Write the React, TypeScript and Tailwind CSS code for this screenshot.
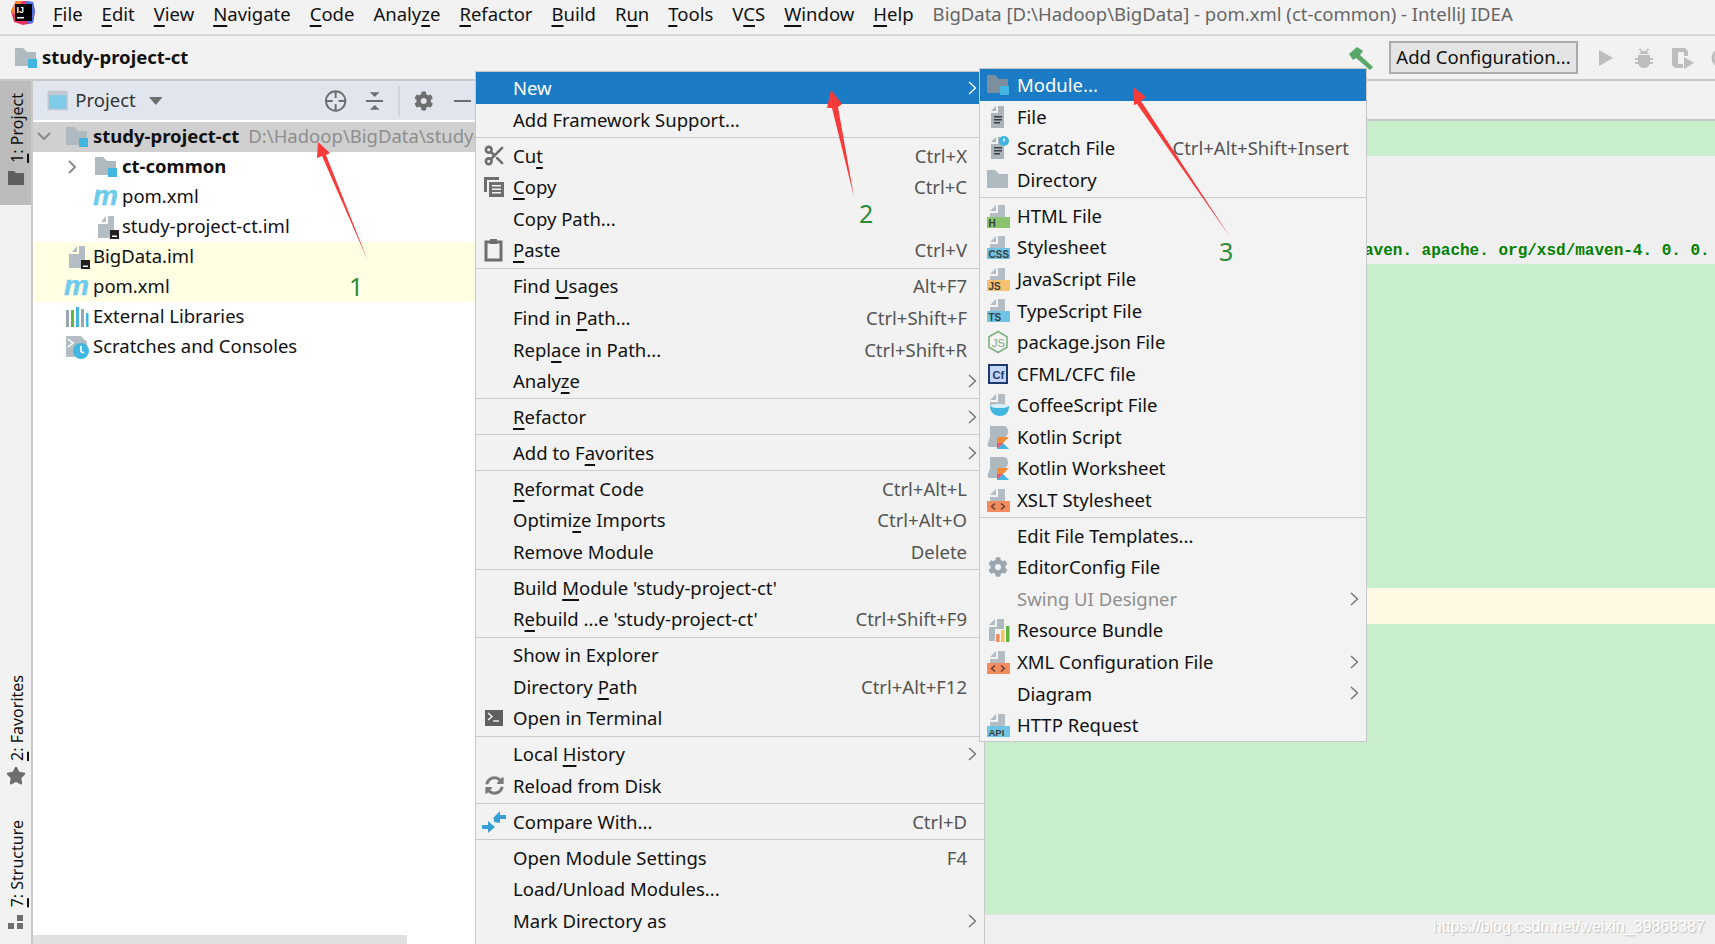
import { Scissors, Star } from "lucide-react";
import { FaCog, FaSyncAlt } from "react-icons/fa";

type Item = {
  label?: string;
  u?: number;
  icon?: React.ReactNode;
  keys?: string;
  more?: boolean;
  active?: boolean;
  off?: boolean;
  sep?: boolean;
};

function Mnemonic({ text, u }: { text: string; u?: number }) {
  if (u === undefined) return <>{text}</>;
  return (
    <>
      {text.slice(0, u)}
      <u className="decoration-[1.5px] underline-offset-[4px]">{text[u]}</u>
      {text.slice(u + 1)}
    </>
  );
}

function FolderIcon({ badge, dark }: { badge?: boolean; dark?: boolean }) {
  return (
    <svg width="24" height="24" viewBox="0 0 24 24">
      <path d="M1 2h8l4 4h9v14H1z" fill={dark ? "#7d8f9e" : "#aeb9c0"} />
      {badge && <rect x="14" y="13" width="9" height="9" fill="#40b6e0" />}
    </svg>
  );
}

function PageBase() {
  return (
    <>
      <path d="M10 1l-6 6h6z" fill="#b4bdc3" />
      <path d="M12 1h7v15H4V9h8z" fill="#b4bdc3" />
    </>
  );
}

function FileIcon({ clock }: { clock?: boolean }) {
  return (
    <svg width="24" height="24" viewBox="0 0 24 24">
      <path d="M10 1L5 6h5z" fill="#aab4ba" />
      <path d="M12 1h6v22H5V8h7z" fill="#aab4ba" />
      <path d="M8 11h8v1.500H8zM8 14h8v1.500H8zM8 17h6v1.500H8z" fill="#3c3f41" />
      {clock && (
        <>
          <circle cx="18" cy="5" r="5" fill="#40b6e0" />
          <path d="M18 2.500V5.500" stroke="#fff" strokeWidth="1.4" />
        </>
      )}
    </svg>
  );
}

function BadgeFile({ bg, text, fg = "#3c3f41", size = 10 }: { bg: string; text: string; fg?: string; size?: number }) {
  return (
    <svg width="24" height="24" viewBox="0 0 24 24">
      <PageBase />
      <rect x="1" y="13" width="23" height="11" fill={bg} />
      <text x="2.500" y="22.500" fontSize={size} fontWeight="700" fontFamily="Liberation Sans, sans-serif" fill={fg}>
        {text}
      </text>
    </svg>
  );
}

function XmlFile() {
  return (
    <svg width="24" height="24" viewBox="0 0 24 24">
      <PageBase />
      <rect x="1" y="13" width="23" height="11" fill="#f08c5f" />
      <path d="M9 15.500l-3.500 3 3.500 3M15 15.500l3.500 3-3.500 3" stroke="#5b3a2a" strokeWidth="1.3" fill="none" />
    </svg>
  );
}

function ImlIcon() {
  return (
    <svg width="24" height="24" viewBox="0 0 24 24" className="ml-[2px]">
      <path d="M10 1L5 7h5z" fill="#b4bdc3" />
      <path d="M12 1h6v14h-4v8H2V9h10z" fill="#b4bdc3" />
      <rect x="14" y="15" width="9" height="9" fill="#231f20" />
      <rect x="16" y="20.500" width="5" height="1.500" fill="#fff" />
    </svg>
  );
}

function MavenIcon() {
  return (
    <svg width="24" height="24" viewBox="0 0 24 24" className="overflow-visible">
      <text x="-1" y="20" fontSize="28" fontStyle="italic" fontWeight="700" fontFamily="Liberation Sans, sans-serif" fill="#6fcbec" stroke="#6fcbec" strokeWidth="0.5">
        m
      </text>
    </svg>
  );
}

function LibrariesIcon() {
  return (
    <svg width="24" height="24" viewBox="0 0 24 24">
      <rect x="1" y="5" width="3" height="17" fill="#9aa7b0" />
      <rect x="6" y="5" width="3" height="17" fill="#62b543" />
      <rect x="11" y="2" width="3" height="20" fill="#40b6e0" />
      <rect x="16" y="4" width="3" height="18" fill="#9aa7b0" />
      <rect x="21" y="8" width="2.500" height="14" fill="#40b6e0" />
    </svg>
  );
}

function ScratchesIcon() {
  return (
    <svg width="24" height="24" viewBox="0 0 24 24">
      <path d="M1 1h15l6 6v4H10v11H1z" fill="#b4bdc3" />
      <path d="M3 4l5 4-5 4" stroke="#fff" strokeWidth="1.6" fill="none" />
      <circle cx="16" cy="16" r="8" fill="#40b6e0" />
      <path d="M16 11v5.500l3 1.500" stroke="#fff" strokeWidth="1.6" fill="none" />
    </svg>
  );
}

function CopyIcon() {
  return (
    <svg width="22" height="22" viewBox="0 0 22 22" fill="#6e6e6e">
      <path d="M1 1h15v3H4v12H1z" />
      <path d="M6 6h15v15H6zM9 9v1.600h9V9zM9 12.500v1.600h9v-1.600zM9 16v1.600h9V16z" fillRule="evenodd" />
    </svg>
  );
}

function PasteIcon() {
  return (
    <svg width="22" height="24" viewBox="0 0 22 24" fill="none">
      <rect x="3" y="4" width="15" height="18" stroke="#6e6e6e" strokeWidth="3" />
      <rect x="7" y="1" width="7" height="5" fill="#6e6e6e" />
    </svg>
  );
}

function TerminalIcon() {
  return (
    <svg width="20" height="18" viewBox="0 0 20 18">
      <rect width="18" height="16" x="1" y="1" fill="#5f5f5f" />
      <path d="M4 4l4 3.500L4 11" stroke="#fff" strokeWidth="1.3" fill="none" />
      <path d="M9 12h6" stroke="#fff" strokeWidth="1.3" />
    </svg>
  );
}

function CompareIcon() {
  return (
    <svg width="24" height="24" viewBox="0 0 24 24" fill="#389fd6">
      <path d="M0 15h6v-4l7 6-7 6v-4H0zM12 12V9h-1L12 7l6-6v4h6v4h-6v4z" />
    </svg>
  );
}

function NodeIcon() {
  return (
    <svg width="22" height="24" viewBox="0 0 22 24" fill="none">
      <path d="M11 1.500l9 5.200v10.600l-9 5.200-9-5.200V6.700z" stroke="#7fb07f" strokeWidth="1.6" />
      <text x="5" y="16.500" fontSize="11" fontFamily="Liberation Sans, sans-serif" fill="#7fa87f">
        JS
      </text>
    </svg>
  );
}

function CfIcon() {
  return (
    <svg width="20" height="20" viewBox="0 0 20 20">
      <rect x="1" y="1" width="18" height="18" fill="#c5d5f5" stroke="#1f3a6e" strokeWidth="2" />
      <text x="4.500" y="14.500" fontSize="11" fontWeight="700" fontFamily="Liberation Sans, sans-serif" fill="#1f3a6e">
        Cf
      </text>
    </svg>
  );
}

function CoffeeIcon() {
  return (
    <svg width="24" height="24" viewBox="0 0 24 24">
      <PageBase />
      <path d="M4 13h19c0 6-3 10-9 10S4 19 4 13z" fill="#40b6e0" />
      <ellipse cx="13.500" cy="13" rx="9" ry="2" fill="#d8f0f8" />
    </svg>
  );
}

function KotlinIcon() {
  return (
    <svg width="24" height="24" viewBox="0 0 24 24">
      <path d="M5 1h13c3 0 4 3 4 6s-2 5-4 5h-4v10H5c-3 0-4-1-3-4l2-6V1z" fill="#aeb9c0" />
      <path d="M11 24l12-12H11z" fill="#f28b3c" />
      <path d="M11 24l6-6 6 6z" fill="#40b6e0" />
      <path d="M11 24v-6l6 0z" fill="#e8557a" />
    </svg>
  );
}

function ResourceIcon() {
  return (
    <svg width="24" height="24" viewBox="0 0 24 24">
      <path d="M9 1L3 7h6z" fill="#aeb9c0" />
      <path d="M11 1h7v10H9v12H3V9h8z" fill="#aeb9c0" />
      <rect x="10" y="16" width="3.500" height="8" fill="#f08c5f" />
      <rect x="15" y="12" width="3.500" height="12" fill="#f4c55c" />
      <rect x="20" y="8" width="3.500" height="16" fill="#62b543" />
    </svg>
  );
}

const mainMenu: Item[] = [
  { label: "New", more: true, active: true },
  { label: "Add Framework Support..." },
  { sep: true },
  { label: "Cut", u: 2, keys: "Ctrl+X", icon: <Scissors size={23} color="#6e6e6e" strokeWidth={2.7} /> },
  { label: "Copy", u: 0, keys: "Ctrl+C", icon: <CopyIcon /> },
  { label: "Copy Path..." },
  { label: "Paste", u: 0, keys: "Ctrl+V", icon: <PasteIcon /> },
  { sep: true },
  { label: "Find Usages", u: 5, keys: "Alt+F7" },
  { label: "Find in Path...", u: 8, keys: "Ctrl+Shift+F" },
  { label: "Replace in Path...", u: 4, keys: "Ctrl+Shift+R" },
  { label: "Analyze", u: 5, more: true },
  { sep: true },
  { label: "Refactor", u: 0, more: true },
  { sep: true },
  { label: "Add to Favorites", u: 8, more: true },
  { sep: true },
  { label: "Reformat Code", u: 0, keys: "Ctrl+Alt+L" },
  { label: "Optimize Imports", u: 6, keys: "Ctrl+Alt+O" },
  { label: "Remove Module", keys: "Delete" },
  { sep: true },
  { label: "Build Module 'study-project-ct'", u: 6 },
  { label: "Rebuild ...e 'study-project-ct'", u: 1, keys: "Ctrl+Shift+F9" },
  { sep: true },
  { label: "Show in Explorer" },
  { label: "Directory Path", u: 10, keys: "Ctrl+Alt+F12" },
  { label: "Open in Terminal", icon: <TerminalIcon /> },
  { sep: true },
  { label: "Local History", u: 6, more: true },
  { label: "Reload from Disk", icon: <FaSyncAlt size={19} color="#7a7a7a" /> },
  { sep: true },
  { label: "Compare With...", keys: "Ctrl+D", icon: <CompareIcon /> },
  { sep: true },
  { label: "Open Module Settings", keys: "F4" },
  { label: "Load/Unload Modules..." },
  { label: "Mark Directory as", more: true },
];

const newMenu: Item[] = [
  { label: "Module...", active: true, icon: <FolderIcon badge dark /> },
  { label: "File", icon: <FileIcon /> },
  { label: "Scratch File", keys: "Ctrl+Alt+Shift+Insert", icon: <FileIcon clock /> },
  { label: "Directory", icon: <FolderIcon /> },
  { sep: true },
  { label: "HTML File", icon: <BadgeFile bg="#8bc46f" text="H" /> },
  { label: "Stylesheet", icon: <BadgeFile bg="#6fc4e6" text="CSS" /> },
  { label: "JavaScript File", icon: <BadgeFile bg="#f4c271" text="JS" /> },
  { label: "TypeScript File", icon: <BadgeFile bg="#6fc4e6" text="TS" /> },
  { label: "package.json File", icon: <NodeIcon /> },
  { label: "CFML/CFC file", icon: <CfIcon /> },
  { label: "CoffeeScript File", icon: <CoffeeIcon /> },
  { label: "Kotlin Script", icon: <KotlinIcon /> },
  { label: "Kotlin Worksheet", icon: <KotlinIcon /> },
  { label: "XSLT Stylesheet", icon: <XmlFile /> },
  { sep: true },
  { label: "Edit File Templates..." },
  { label: "EditorConfig File", icon: <FaCog size={20} color="#9aa7b0" /> },
  { label: "Swing UI Designer", off: true, more: true },
  { label: "Resource Bundle", icon: <ResourceIcon /> },
  { label: "XML Configuration File", icon: <XmlFile />, more: true },
  { label: "Diagram", more: true },
  { label: "HTTP Request", icon: <BadgeFile bg="#6fc4e6" text="API" size={9.5} /> },
];

function MenuRow({ item }: { item: Item }) {
  if (item.sep) {
    return (
      <div className="flex h-[4.4px] items-center">
        <div className="h-px w-full bg-[#cbcbcb]" />
      </div>
    );
  }
  return (
    <div
      className={`flex items-center ${item.active ? "h-[32px] bg-[#1b7bc4] text-white" : item.off ? "h-[31.55px] text-[#8f8f8f]" : "h-[31.55px] text-[#111]"}`}
    >
      <div className="flex w-[37px] shrink-0 justify-center pr-[1px]">{item.icon}</div>
      <span className="whitespace-nowrap">
        <Mnemonic text={item.label ?? ""} u={item.u} />
      </span>
      {item.keys && <span className="ml-auto pr-[17px] text-[#555]">{item.keys}</span>}
      {item.more && (
        <svg className="ml-auto mr-[7px]" width="9" height="14" viewBox="0 0 9 14" fill="none">
          <path d="M1 1l6.500 6L1 13" stroke={item.active ? "#fff" : "#6e6e6e"} strokeWidth="1.3" />
        </svg>
      )}
    </div>
  );
}

function TreeRow({
  icon,
  indent,
  arrow,
  bg,
  children,
}: {
  icon: React.ReactNode;
  indent: string;
  arrow?: "open" | "closed";
  bg?: string;
  children: React.ReactNode;
}) {
  return (
    <div className={`relative flex h-[30px] items-center whitespace-nowrap ${indent} ${bg ?? ""}`}>
      {arrow === "open" && (
        <svg className="absolute left-[4px] top-[10px]" width="14" height="10" viewBox="0 0 14 10" fill="none">
          <path d="M1 1l6 6 6-6" stroke="#8a8a8a" strokeWidth="2" />
        </svg>
      )}
      {arrow === "closed" && (
        <svg className="absolute left-[35px] top-[8px]" width="10" height="14" viewBox="0 0 10 14" fill="none">
          <path d="M1 1l6 6-6 6" stroke="#8a8a8a" strokeWidth="2" />
        </svg>
      )}
      <div className="mr-[4px] w-[24px] shrink-0">{icon}</div>
      <span className="-mt-[2px]">{children}</span>
    </div>
  );
}

function VerticalLabel({ digit, text }: { digit: string; text: string }) {
  return (
    <span className="ml-[3px] rotate-180 whitespace-nowrap text-[16px] leading-[20px] text-[#111] [writing-mode:vertical-rl]">
      <u className="decoration-[1.5px] underline-offset-[1px]">{digit}</u>
      {text}
    </span>
  );
}

export default function App() {
  return (
    <div className="relative flex h-[944px] w-[1715px] flex-col overflow-hidden bg-[#f2f2f2] font-['Noto_Sans',sans-serif] text-[18.5px] text-[#111]">
      {/* title + menu bar */}
      <div className="flex h-[36px] shrink-0 items-center border-b-2 border-[#d8d8d8] pl-[11px]">
        <svg width="24" height="24" viewBox="0 0 24 24" className="-mt-[8px] mr-[18px]">
          <path d="M5 0L0 10l3 11 9 3 10-2 2-12-2-9-8-1z" fill="#e8325f" />
          <path d="M14 0l8 1 2 9-2 12-6 1z" fill="#4f6fe0" />
          <path d="M0 10l5-10h6L4 14z" fill="#f58a2c" />
          <rect x="4" y="3" width="17" height="17" fill="#000" />
          <text x="5.500" y="12" fontSize="9" fontWeight="700" fontFamily="Liberation Sans, sans-serif" fill="#fff">
            IJ
          </text>
          <rect x="6" y="16" width="7" height="1.500" fill="#fff" />
        </svg>
        <div className="-mt-[6px] flex gap-[19px]">
          {[
            ["File", 0],
            ["Edit", 0],
            ["View", 0],
            ["Navigate", 0],
            ["Code", 0],
            ["Analyze", 5],
            ["Refactor", 0],
            ["Build", 0],
            ["Run", 1],
            ["Tools", 0],
            ["VCS", 1],
            ["Window", 0],
            ["Help", 0],
          ].map(([label, u]) => (
            <span key={label as string}>
              <Mnemonic text={label as string} u={u as number} />
            </span>
          ))}
        </div>
        <span className="-mt-[6px] ml-[19px] whitespace-nowrap text-[#666]">
          BigData [D:\Hadoop\BigData] - pom.xml (ct-common) - IntelliJ IDEA
        </span>
      </div>

      {/* navigation bar + run toolbar */}
      <div className="flex h-[43px] shrink-0 items-center pl-[14px]">
        <FolderIcon badge />
        <span className="-mt-[2px] ml-[4px] font-bold">study-project-ct</span>
        <div className="-mr-[15px] ml-auto flex items-center">
          <svg width="26" height="24" viewBox="0 0 26 24">
            <path d="M1 8l8-7 6 4-3 4 13 12-3 3L8 12l-3 2z" fill="#59a869" />
          </svg>
          <button className="ml-[15px] flex h-[33px] w-[189px] items-center justify-center border-2 border-[#ababab] bg-[#e4e4e4] pb-[2px] text-[#111]">
            Add Configuration...
          </button>
          <svg className="ml-[20px]" width="16" height="18" viewBox="0 0 16 18">
            <path d="M1 1l14 8-14 8z" fill="#bdbdbd" />
          </svg>
          <svg className="ml-[20px]" width="20" height="22" viewBox="0 0 20 22" fill="#bdbdbd">
            <path d="M6 1l2 3h4l2-3 1 1-2 3 2 2H5l2-2-2-3zM4 8h12v3h3v2h-3v2h3v2h-3.500c-1 3-3 4-5.500 4s-4.500-1-5.500-4H1v-2h3v-2H1v-2h3z" />
          </svg>
          <svg className="ml-[17px]" width="24" height="24" viewBox="0 0 24 24" fill="#bdbdbd">
            <path d="M1 2h13l3 3v5h-4V6H7v12h5v4H4l-3-3zM13 11l10 6-10 6z" />
          </svg>
          <svg className="ml-[15px]" width="20" height="22" viewBox="0 0 20 22" fill="none">
            <circle cx="11" cy="11" r="8" stroke="#bdbdbd" strokeWidth="3" />
          </svg>
        </div>
      </div>

      <div className="flex min-h-0 flex-1">
        {/* left tool strip */}
        <div className="flex w-[33px] shrink-0 flex-col border-r-2 border-t-2 border-[#c8c8c8]">
          <div className="flex h-[124px] w-[31px] flex-col items-center gap-[8px] bg-[#bcbcbc] pt-[12px]">
            <VerticalLabel digit="1" text=": Project" />
            <svg className="ml-[1px]" width="16" height="14" viewBox="0 0 16 14">
              <path d="M0 0h6l2 2h8v12H0z" fill="#5f5f5f" />
            </svg>
          </div>
          <div className="mt-[470px] flex flex-col items-center gap-[5px]">
            <VerticalLabel digit="2" text=": Favorites" />
            <Star size={20} fill="#6e6e6e" color="#6e6e6e" />
          </div>
          <div className="mt-[34px] flex flex-col items-center gap-[8px]">
            <VerticalLabel digit="7" text=": Structure" />
            <svg width="15" height="15" viewBox="0 0 15 15" fill="#6e6e6e">
              <path d="M9 0h6v6H9zM0 8h6v6H0zM9 8h6v6H9z" />
            </svg>
          </div>
        </div>

        {/* project panel */}
        <div className="flex w-[442px] shrink-0 flex-col">
          <div className="flex h-[41px] shrink-0 items-center border-t-2 border-[#c8c8c8] bg-[#e1e5ee] pl-[14px] pr-[4px]">
            <svg width="22" height="21" viewBox="0 0 22 21">
              <rect width="21" height="20" x="0.500" y="0.500" fill="#c2c9d2" />
              <rect x="2" y="5" width="18" height="14" fill="#80cbe8" />
            </svg>
            <span className="-mt-[2px] ml-[7px] text-[#333]">Project</span>
            <svg className="ml-[13px]" width="14" height="8" viewBox="0 0 14 8">
              <path d="M0 0h14L7 8z" fill="#6e6e6e" />
            </svg>
            <svg className="ml-[162px]" width="24" height="24" viewBox="0 0 24 24" fill="none">
              <circle cx="12" cy="12" r="10" stroke="#6e6e6e" strokeWidth="2" />
              <path d="M12 2v7M12 15v7M2 12h7M15 12h7" stroke="#6e6e6e" strokeWidth="2" />
            </svg>
            <svg className="ml-[18px]" width="18" height="20" viewBox="0 0 18 20" fill="#6e6e6e">
              <path d="M0 9h18v2H0zM4 1h10L9 6zM9 14l5 5H4z" />
            </svg>
            <div className="ml-[15px] h-[30px] w-[2px] bg-[#cfd3da]" />
            <FaCog className="ml-[14px]" size={20} color="#6e6e6e" />
            <div className="ml-[20px] h-[2px] w-[18px] bg-[#6e6e6e]" />
          </div>
          <div className="h-[2px] shrink-0 bg-white" />
          <div className="min-h-0 flex-1 overflow-hidden bg-white">
            <TreeRow icon={<FolderIcon badge />} indent="pl-[32px]" arrow="open" bg="bg-[#d0d0d0]">
              <span className="font-bold">study-project-ct</span>
              <span className="ml-[9px] text-[#8e8e8e]">D:\Hadoop\BigData\study-project-ct</span>
            </TreeRow>
            <TreeRow icon={<FolderIcon badge />} indent="pl-[61px]" arrow="closed">
              <span className="font-bold">ct-common</span>
            </TreeRow>
            <TreeRow icon={<MavenIcon />} indent="pl-[61px]">
              pom.xml
            </TreeRow>
            <TreeRow icon={<ImlIcon />} indent="pl-[61px]">
              study-project-ct.iml
            </TreeRow>
            <TreeRow icon={<ImlIcon />} indent="pl-[32px]" bg="bg-[#ffffe4]">
              BigData.iml
            </TreeRow>
            <TreeRow icon={<MavenIcon />} indent="pl-[32px]" bg="bg-[#ffffe4]">
              pom.xml
            </TreeRow>
            <TreeRow icon={<LibrariesIcon />} indent="pl-[32px]">
              External Libraries
            </TreeRow>
            <TreeRow icon={<ScratchesIcon />} indent="pl-[32px]">
              Scratches and Consoles
            </TreeRow>
          </div>
          <div className="flex h-[9px] shrink-0 bg-white">
            <div className="h-full w-[374px] bg-[#e0e0e0]" />
          </div>
        </div>

        {/* editor */}
        <div className="flex min-w-0 flex-1 flex-col">
          <div className="h-[42px] shrink-0 border-y-2 border-[#c8c8c8]" />
          <div className="h-[35px] shrink-0 bg-[#c8eecc]" />
          <div className="flex h-[108px] shrink-0 items-end overflow-hidden whitespace-nowrap bg-[#efefef] pb-[1px] pl-[889px] font-['Liberation_Mono',monospace] text-[16px] font-bold text-[#008000]">
            aven. apache. org/xsd/maven-4. 0. 0. xsd
          </div>
          <div className="h-[324px] shrink-0 bg-[#c8eecc]" />
          <div className="h-[36px] shrink-0 bg-[#fff8e3]" />
          <div className="flex-1 bg-[#c8eecc]" />
          <div className="flex h-[30px] shrink-0 items-center justify-end border-t border-[#e4e4e4] bg-[#efefef] pb-[5px] pr-[10px] font-['Liberation_Sans',sans-serif] text-[16px] text-white [text-shadow:1px_1px_1px_rgba(0,0,0,0.22)]">
            https://blog.csdn.net/weixin_39868387
          </div>
        </div>
      </div>

      {/* context menu */}
      <div className="absolute left-[475px] top-[71px] h-[880px] w-[510px] border border-[#c8c8c8] bg-[#f2f2f2]">
        {mainMenu.map((item, i) => (
          <MenuRow key={i} item={item} />
        ))}
      </div>

      {/* New submenu */}
      <div className="absolute left-[979px] top-[68px] w-[388px] border border-[#c8c8c8] bg-[#f3f3f3]">
        {newMenu.map((item, i) => (
          <MenuRow key={i} item={item} />
        ))}
      </div>

      {/* red annotation arrows */}
      <svg className="absolute inset-0" width="1715" height="944" viewBox="0 0 1715 944">
        <polygon points="318,142 330,153 326,155 368,261 322,156 317,158" fill="#f73b3a" />
        <polygon points="831,90 842,104 838,107 854,197 832,108 827,108" fill="#f73b3a" />
        <polygon points="1133,87 1146,97 1141,101 1230,237 1137,104 1134,105" fill="#f73b3a" />
      </svg>
      <span className="absolute left-[349px] top-[268px] text-[25px] leading-[36px] text-[#2e8b3a]">1</span>
      <span className="absolute left-[859px] top-[195px] text-[25px] leading-[36px] text-[#2e8b3a]">2</span>
      <span className="absolute left-[1219px] top-[233px] text-[25px] leading-[36px] text-[#2e8b3a]">3</span>
    </div>
  );
}
